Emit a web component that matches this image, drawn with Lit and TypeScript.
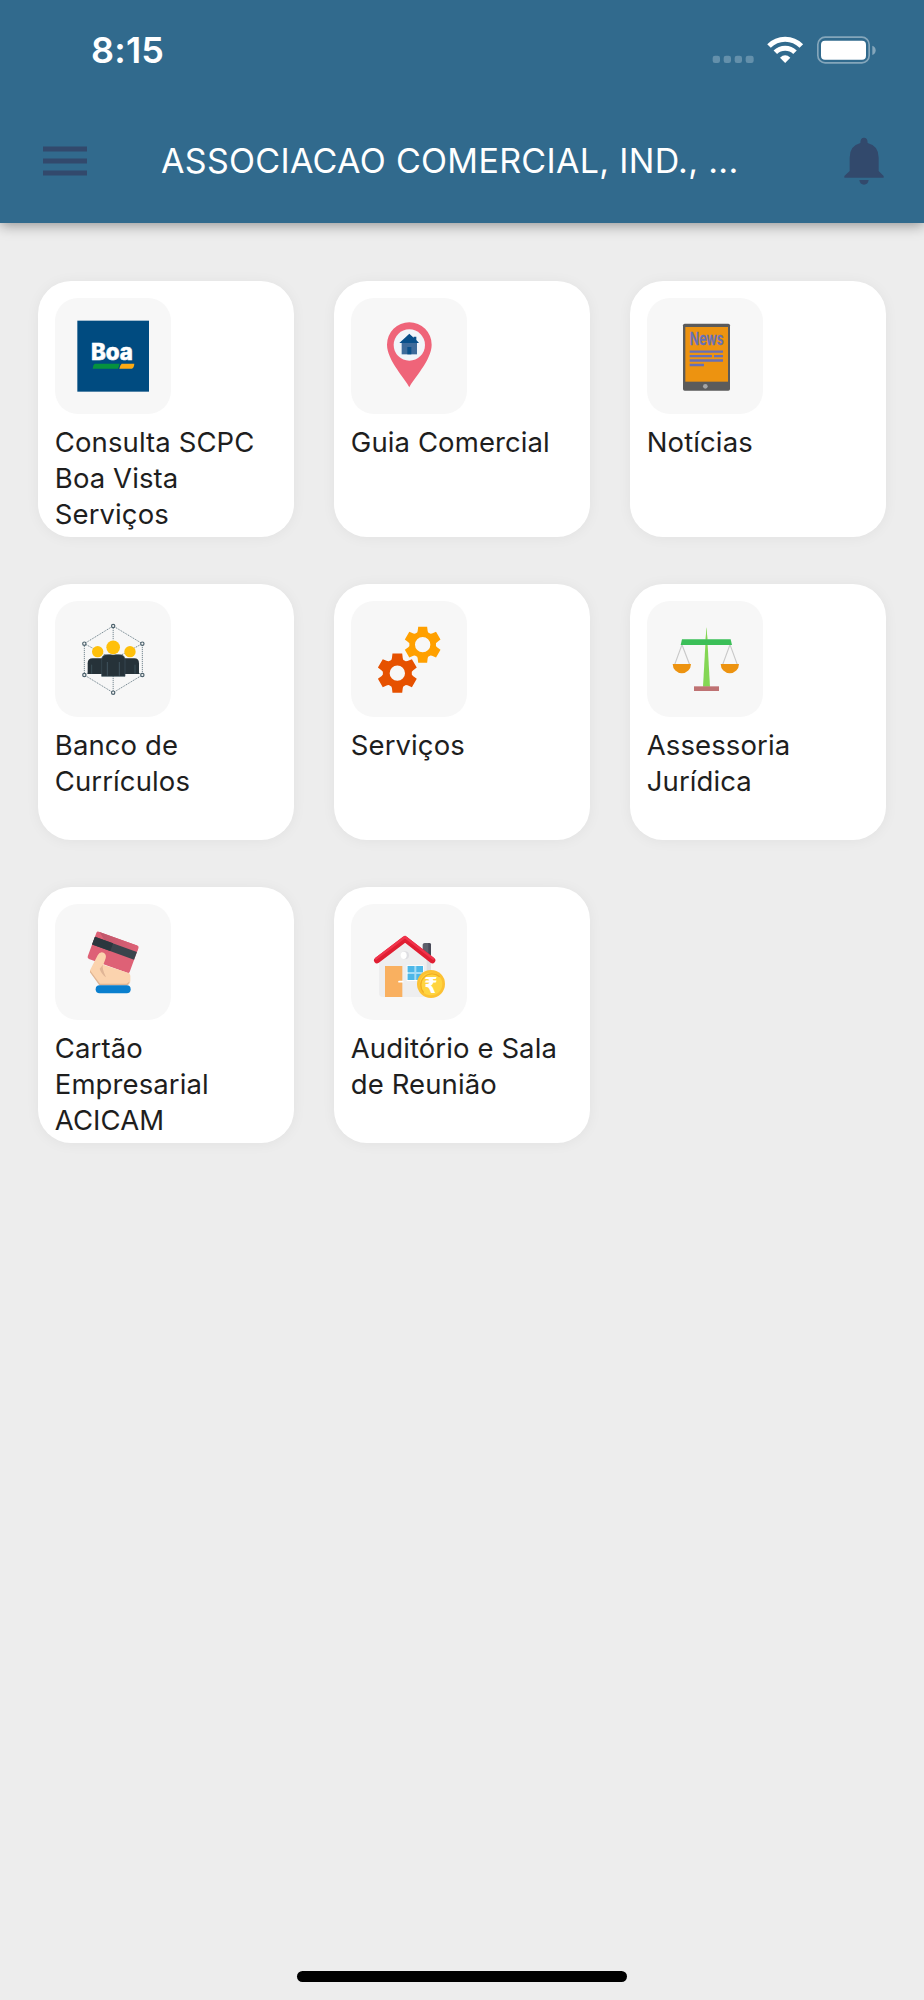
import { LitElement, html, svg, css } from "lit";
import { customElement, property } from "lit/decorators.js";

function gearPath(cx: number, cy: number, s: number): string {
  const tooth = [[-16.5, 36.5], [-15, 41], [-13.4, 54], [13.4, 54], [15, 41], [16.5, 36.5]];
  const pts: string[] = [];
  for (let i = 0; i < 6; i++) {
    const a = (i * Math.PI) / 3;
    for (const [x, y] of tooth) {
      const px = cx + s * (x * Math.cos(a) + y * Math.sin(a));
      const py = cy + s * (x * Math.sin(a) - y * Math.cos(a));
      pts.push(`${px.toFixed(1)} ${py.toFixed(1)}`);
    }
  }
  const r = 23;
  return `M${pts.join("L")}Z M${cx - r} ${cy}a${r} ${r} 0 1 0 ${2 * r} 0a${r} ${r} 0 1 0 ${-2 * r} 0Z`;
}

const icons: Record<string, unknown> = {
  boa: svg`
    <rect x="66" y="67" width="215" height="213" fill="#004b80"/>
    <text x="107" y="185" font-family="Inter" font-weight="800" font-size="67" textLength="126" lengthAdjust="spacingAndGlyphs" fill="#fff" stroke="#fff" stroke-width="1.5">Boa</text>
    <path d="M118 196H193L188 211H112Q113 199 118 196Z" fill="#06923e"/>
    <path d="M199 196H237Q236 209 229 211H192Q194 200 199 196Z" fill="#fcaa13"/>`,
  pin: svg`
    <path d="M174 267C163 242 107 186 107 139A67 67 0 0 1 241 139C241 186 185 242 174 267Z" fill="#ef6479"/>
    <circle cx="174" cy="140" r="47" fill="#f1f5fa"/>
    <rect x="151" y="131" width="46" height="37" fill="#3e6b9b"/>
    <path d="M144 134L174 106L187 118V115H195V125L203 134Z" fill="#084f8a"/>
    <rect x="168" y="146" width="12" height="22" fill="#0b508a"/>`,
  news: svg`
    <rect x="107" y="76" width="141" height="201" rx="5" fill="#5b5b5b"/>
    <rect x="114" y="86" width="128" height="164" fill="#ed9310"/>
    <text x="127" y="141" font-family="Inter" font-weight="600" font-size="53" textLength="102" lengthAdjust="spacingAndGlyphs" fill="#6670b8" stroke="#6670b8" stroke-width="1">News</text>
    <path d="M127 160H227M127 173.500H194M200 173.500H227M127 186.500H227M127 200H170" stroke="#6670b8" stroke-width="7"/>
    <circle cx="174" cy="264" r="7" fill="#a5a5a5"/>`,
  people: svg`
    <path d="M173.500 74L87 127V221L173.500 274L261 221V127ZM173.500 74V274M87 127L261 221M261 127L87 221" fill="none" stroke="#607580" stroke-width="2.600" stroke-dasharray="3.500 2.500"/>
    <g fill="#f7f7f7" stroke="#4d626d" stroke-width="3.500">
      <circle cx="173.500" cy="74" r="5"/><circle cx="87" cy="127" r="5"/><circle cx="87" cy="221" r="5"/>
      <circle cx="173.500" cy="274" r="5"/><circle cx="261" cy="221" r="5"/><circle cx="261" cy="127" r="5"/>
    </g>
    <g fill="#ffc00b"><circle cx="127" cy="151" r="17"/><circle cx="224" cy="151" r="17"/></g>
    <path d="M97 218V186Q97 171 112 171H237Q251 171 251 186V218Z" fill="#263239"/>
    <path d="M109 190V217M239 190V217" stroke="#40545e" stroke-width="2.500"/>
    <path d="M139 225V176Q139 160 156 160H192Q209 160 209 176V225Z" fill="#263239" stroke="#3d505b" stroke-width="2"/>
    <path d="M156 182V223M192 182V223" stroke="#40545e" stroke-width="3"/>
    <circle cx="173.500" cy="138" r="22" fill="#f7f7f7"/>
    <circle cx="173.500" cy="138" r="20.500" fill="#ffc00b"/>`,
  gears: svg`
    <path d=${gearPath(214, 130, 1)} fill="#ffa000" fill-rule="evenodd"/>
    <path d=${gearPath(138, 215.5, 1.09)} fill="#e65100" fill-rule="evenodd"/>`,
  scales: svg`
    <path d="M177.500 78L180 114L188 256H167L175 114Z" fill="#84d654"/>
    <path d="M104 130L82 190M104 130L127 190M248 130L226 190M248 130L270 190" stroke="#c9c9c9" stroke-width="3.500"/>
    <path d="M104 114H250L254 131H100Z" fill="#3bbf58"/>
    <path d="M177.500 78L180 114H175Z" fill="#84d654"/>
    <path d="M76 188H131A27.500 27.500 0 0 1 76 188ZM220 188H275A27.500 27.500 0 0 1 220 188Z" fill="#ed9310"/>
    <rect x="140" y="255" width="75" height="14" fill="#bf7273"/>`,
  card: svg`
    <defs>
      <linearGradient id="sheen"><stop stop-color="#bd566a"/><stop offset="1" stop-color="#de6176"/></linearGradient>
    </defs>
    <g transform="translate(125 80) rotate(20)">
      <rect width="134" height="87" rx="6" fill="#de6176"/>
      <path d="M8 0H128Q134 0 134 6V18H30Z" fill="url(#sheen)"/>
      <rect y="18" width="134" height="25" fill="#3a444c"/>
      <rect y="18" width="58" height="25" fill="#2b373e"/>
    </g>
    <path d="M104 198L127 153Q134 140 145 145Q154 150 151 162L144 181L222 207L225 214V229Q225 242 212 243H134L104 203Z" fill="#fbd3ae"/>
    <path d="M143 181Q139 191 152 219Q137 208 133 193Z" fill="#e0b596"/>
    <path d="M104 198L134 238H214L222 232Q220 243 212 243H132L104 204Z" fill="#dfb594"/>
    <rect x="121" y="243" width="105" height="24" rx="12" fill="#0a7fce"/>`,
  house: svg`
    <path d="M214 121Q214 116 220 116H233Q239 116 239 121V158H214Z" fill="#5e606c"/>
    <path d="M231 116H233Q239 116 239 121V158H231Z" fill="#484957"/>
    <path d="M83 162L160 101L239 162V278H95Q83 278 83 266Z" fill="#eeeeef"/>
    <path d="M226 150L239 160V220H226Z" fill="#dedee2"/>
    <rect x="101" y="185" width="52" height="93" fill="#f9b060"/>
    <path d="M143 232H154" stroke="#fff" stroke-width="5" stroke-linecap="round"/>
    <rect x="166" y="183" width="51" height="47" fill="#fff"/>
    <rect x="169" y="185" width="46" height="42" fill="#a5dcf5"/>
    <path d="M169 185H189V203H169ZM195 185H215V203H195ZM169 209H189V227H169ZM195 209H215V227H195Z" fill="#4db7e8"/>
    <circle cx="161" cy="153" r="12" fill="#dedee2"/><ellipse cx="157" cy="153" rx="9" ry="11" fill="#fff"/>
    <path d="M77 168L161 104L243 168" fill="none" stroke="#e01e32" stroke-width="18" stroke-linecap="round" stroke-linejoin="round"/>
    <path d="M74 163L161 98L245 163" fill="none" stroke="#f0344c" stroke-width="7" stroke-linecap="round"/>
    <circle cx="239" cy="239" r="42" fill="#fcc133"/>
    <circle cx="239" cy="239" r="34" fill="#ffd43f"/>
    <path d="M217 265A34 34 0 0 1 265 217" fill="none" stroke="#f2ae22" stroke-width="4"/>
    <text x="219" y="265" font-family="DejaVu Sans" font-weight="700" font-size="66" textLength="40" lengthAdjust="spacingAndGlyphs" fill="#fff">₹</text>`,
};

@customElement("service-card")
class ServiceCard extends LitElement {
  @property() label = "";
  @property() icon = "";
  static styles = css`
    :host {
      display: block;
      box-sizing: border-box;
      height: 256px;
      padding: 17.3px 0 0 17.3px;
      border-radius: 33px;
      background: #fff;
      box-shadow: 0 1px 14px rgba(0, 0, 0, 0.05);
    }
    .tile { display: block; width: 116px; height: 116px; border-radius: 23px; background: #f7f7f7; }
    .label {
      margin: 11px 0 0 -0.5px;
      font-size: 27.5px;
      line-height: 35.75px;
      letter-spacing: 0.1px;
      color: #1e1e1e;
    }
  `;
  render() {
    return html`
      <svg class="tile" viewBox="-1 -1 348 348">${icons[this.icon]}</svg>
      <p class="label">${this.label}</p>
    `;
  }
}

const services = [
  ["boa", "Consulta SCPC Boa Vista Serviços"],
  ["pin", "Guia Comercial"],
  ["news", "Notícias"],
  ["people", "Banco de Currículos"],
  ["gears", "Serviços"],
  ["scales", "Assessoria Jurídica"],
  ["card", "Cartão Empresarial ACICAM"],
  ["house", "Auditório e Sala de Reunião"],
];

@customElement("app-root")
class AppRoot extends LitElement {
  static styles = css`
    :host {
      display: flex;
      flex-direction: column;
      box-sizing: border-box;
      height: 2000px;
      background: #ededed;
      font-family: Inter, "Liberation Sans", sans-serif;
    }
    header { height: 223.3px; background: #316a8d; box-shadow: 0 2px 13px rgba(0, 0, 0, 0.4); color: #fff; }
    .status { display: flex; height: 100px; align-items: center; padding: 0 47px 0 91px; }
    .time { flex: 1; font-size: 36px; font-weight: 600; letter-spacing: 0.2px; }
    .toolbar { display: flex; height: 121px; align-items: center; padding: 0 40px 0 43px; }
    .title { flex: 1; margin: 0 0 0 74px; font-size: 34px; font-weight: 430; letter-spacing: 0.32px; }
    .grid {
      display: grid;
      grid-template-columns: repeat(3, 256px);
      gap: 47px 40px;
      padding: 57.7px 38px 0;
    }
    .home { width: 330px; height: 11px; margin: auto auto 18px; border-radius: 6px; background: #000; }
    svg { display: block; }
  `;
  render() {
    return html`
      <header>
        <div class="status">
          <span class="time">8:15</span>
          <svg width="165" height="30" viewBox="0 0 495 90">
            <g fill="#6490ab">
              <rect x="2" y="62" width="22" height="22" rx="7"/><rect x="35" y="62" width="22" height="22" rx="7"/>
              <rect x="68" y="62" width="22" height="22" rx="7"/><rect x="101" y="62" width="24" height="22" rx="7"/>
            </g>
            <g fill="none" stroke="#fff" stroke-width="15">
              <path d="M171 33A68 68 0 0 1 268 33"/><path d="M190 52A42 42 0 0 1 249 52"/>
            </g>
            <path d="M219.5 84L204 68Q219.5 54 235 68Z" fill="#fff"/>
            <rect x="317.5" y="6.5" width="154" height="77" rx="22" fill="none" stroke="#84a6bb" stroke-width="5"/>
            <rect x="327" y="17" width="135" height="57" rx="12" fill="#fff"/>
            <path d="M481 32Q491 35 491 46T481 60Z" fill="#84a6bb"/>
          </svg>
        </div>
        <div class="toolbar">
          <svg width="44" height="30" viewBox="0 0 132 90">
            <path d="M0 9H132M0 45H132M0 81H132" stroke="#32496c" stroke-width="15"/>
          </svg>
          <h1 class="title">ASSOCIACAO COMERCIAL, IND., ...</h1>
          <svg width="40" height="48" viewBox="0 0 120 144">
            <path d="M60 2Q71 2 71 18Q104 26 104 62V102L119 117V122H1V117L17 102V62Q17 26 49 18Q49 2 60 2ZM46 129H74Q72 143 60 143T46 129Z" fill="#32496c"/>
          </svg>
        </div>
      </header>
      <main class="grid">
        ${services.map(([icon, label]) => html`<service-card icon=${icon} label=${label}></service-card>`)}
      </main>
      <div class="home"></div>
    `;
  }
}
